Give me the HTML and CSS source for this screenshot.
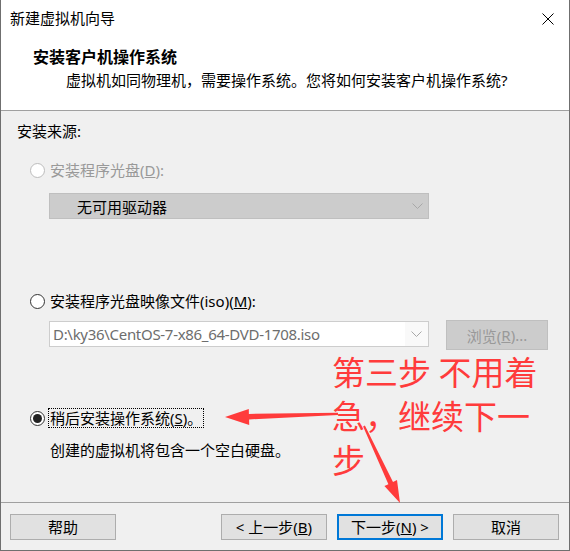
FILE: index.html
```html
<!DOCTYPE html>
<html lang="zh-CN">
<head>
<meta charset="utf-8">
<title>新建虚拟机向导</title>
<link rel="stylesheet" href="styles.css">
</head>
<body>
<div class="window">
  <div class="header">
    <div class="titlebar">
      <span class="title">新建虚拟机向导</span>
      <svg class="close" width="12" height="12" viewBox="0 0 12 12"><path d="M0.5 0.5 L11.5 11.5 M11.5 0.5 L0.5 11.5" stroke="#000" stroke-width="1" fill="none"/></svg>
    </div>
    <div class="heading">安装客户机操作系统</div>
    <div class="subtitle">虚拟机如同物理机，需要操作系统。您将如何安装客户机操作系统?</div>
  </div>

  <div class="content">
    <div class="row source">安装来源:</div>

    <div class="row radio-row r1 disabled">
      <span class="radio"></span>
      <span class="label">安装程序光盘(<u>D</u>):</span>
    </div>
    <div class="combo combo-disabled">
      <span class="combo-text">无可用驱动器</span>
      <svg class="chev" width="11" height="6" viewBox="0 0 11 6"><path d="M0.5 0.5 L5.5 5.5 L10.5 0.5" stroke="#a8a8a8" stroke-width="1" fill="none"/></svg>
    </div>

    <div class="row radio-row r2">
      <span class="radio"></span>
      <span class="label">安装程序光盘映像文件(iso)(<u>M</u>):</span>
    </div>
    <div class="iso-row">
      <div class="combo combo-iso">
        <span class="iso-field">D:\ky36\CentOS-7-x86_64-DVD-1708.iso</span>
        <span class="iso-btn"><svg class="chev" width="11" height="6" viewBox="0 0 11 6"><path d="M0.5 0.5 L5.5 5.5 L10.5 0.5" stroke="#a8a8a8" stroke-width="1" fill="none"/></svg></span>
      </div>
      <div class="browse">浏览(<u>R</u>)...</div>
    </div>

    <div class="row radio-row r3">
      <span class="radio checked"></span>
      <span class="label focus">稍后安装操作系统(<u>S</u>)。</span>
    </div>
    <div class="row desc">创建的虚拟机将包含一个空白硬盘。</div>
  </div>

  <div class="footer">
    <button class="btn help">帮助</button>
    <div class="nav">
      <button class="btn">&lt; 上一步(<u>B</u>)</button>
      <button class="btn default">下一步(<u>N</u>) &gt;</button>
      <button class="btn">取消</button>
    </div>
  </div>

  <div class="note">第三步 不用着<br>急，继续下一<br>步</div>
  <svg class="arrows" width="570" height="551" viewBox="0 0 570 551">
    <polygon fill="#ff3b3b" points="225,417 248.8,408.9 248.9,413.9 338,412.8 338,415 249.1,419.4 249.2,424.9"/>
    <polygon fill="#ff3b3b" points="400,503 397,480.1 393,482 364.9,425.6 363.1,426.4 388.4,484.2 384.4,486.1"/>
  </svg>
</div>
</body>
</html>
```

FILE: styles.css
```css
* {
  box-sizing: border-box;
  margin: 0;
  padding: 0;
}

html, body {
  width: 570px;
  height: 551px;
  overflow: hidden;
}

body {
  background: #f0f0f0;
  font-family: "Noto Sans", "Noto Sans CJK SC", sans-serif;
  font-size: 15px;
  color: #000;
}

.window {
  position: relative;
  width: 570px;
  height: 551px;
  border: 1px solid #6f6f6f;
  border-top: none;
  display: flex;
  flex-direction: column;
  background: #f0f0f0;
}

.header {
  height: 111px;
  background: #fff;
  border-bottom: 1px solid #a0a0a0;
}

.titlebar {
  height: 36px;
  display: flex;
  align-items: center;
  justify-content: space-between;
  padding: 0 15px 0 9px;
}

.title {
  line-height: 20px;
}

.close {
  display: block;
  margin-top: 2px;
}

.heading {
  margin-top: 11px;
  padding-left: 32px;
  height: 20px;
  line-height: 20px;
  font-size: 16px;
  font-weight: 700;
}

.subtitle {
  margin-top: 3px;
  padding-left: 65px;
  height: 20px;
  line-height: 20px;
}

.content {
  flex: 1;
}

.row {
  height: 20px;
  line-height: 20px;
  display: flex;
  align-items: center;
}

.source {
  margin: 10px 0 0 16px;
}

.radio-row {
  margin-left: 29px;
}

.r1 { margin-top: 19px; }
.r2 { margin-top: 72px; }
.r3 { margin-top: 58px; }

.radio {
  width: 15px;
  height: 15px;
  border-radius: 50%;
  border: 1px solid #333;
  background: #fff;
  margin-right: 5px;
  flex: none;
  display: flex;
  align-items: center;
  justify-content: center;
}

.radio.checked::after {
  content: "";
  width: 9px;
  height: 9px;
  border-radius: 50%;
  background: #222;
}

.disabled .radio {
  border-color: #bcbcbc;
}

.disabled .label {
  color: #999;
}

.label.focus {
  border: 1px dotted #000;
  padding: 0 1px;
  margin-left: -2px;
  height: 20px;
  line-height: 18px;
}

.combo {
  margin-left: 48px;
  width: 380px;
  height: 26px;
  display: flex;
  align-items: center;
}

.combo-disabled {
  margin-top: 13px;
  background: #cccccc;
  border: 1px solid #bfbfbf;
  padding-left: 27px;
  justify-content: space-between;
  padding-right: 5px;
}

.combo-text {
  color: #000;
}

.chev {
  display: block;
}

.iso-row {
  margin-top: 9px;
  height: 30px;
  display: flex;
  align-items: flex-start;
}

.combo-iso {
  margin-top: 1px;
  border: 1px solid #cdcdcd;
  background: #fff;
}

.iso-field {
  flex: 1;
  height: 24px;
  line-height: 24px;
  padding-left: 3px;
  color: #6d6d6d;
  letter-spacing: -0.3px;
  white-space: nowrap;
  overflow: hidden;
}

.iso-btn {
  width: 23px;
  height: 24px;
  background: #f9f9f9;
  display: flex;
  align-items: center;
  justify-content: center;
}

.browse {
  margin-left: 17px;
  width: 102px;
  height: 30px;
  background: #cccccc;
  border: 1px solid #bfbfbf;
  color: #999;
  display: flex;
  align-items: center;
  justify-content: center;
}

.desc {
  margin: 12px 0 0 49px;
}

.footer {
  height: 48px;
  border-top: 1px solid #a0a0a0;
  padding: 11px 10px 0 9px;
  display: flex;
  justify-content: space-between;
  align-items: flex-start;
}

.nav {
  display: flex;
  gap: 10px;
}

.btn {
  width: 106px;
  height: 26px;
  background: #e1e1e1;
  border: 1px solid #adadad;
  font-family: inherit;
  font-size: 15px;
  color: #000;
  line-height: 22px;
  display: flex;
  align-items: center;
  justify-content: center;
}

.btn.default {
  border: 2px solid #0078d7;
}

.note {
  position: absolute;
  left: 331px;
  top: 349px;
  font-family: "Noto Sans CJK SC", sans-serif;
  font-size: 33px;
  line-height: 44px;
  color: #ff3b3b;
  white-space: nowrap;
}

.arrows {
  position: absolute;
  left: -1px;
  top: 0;
  pointer-events: none;
}
```
